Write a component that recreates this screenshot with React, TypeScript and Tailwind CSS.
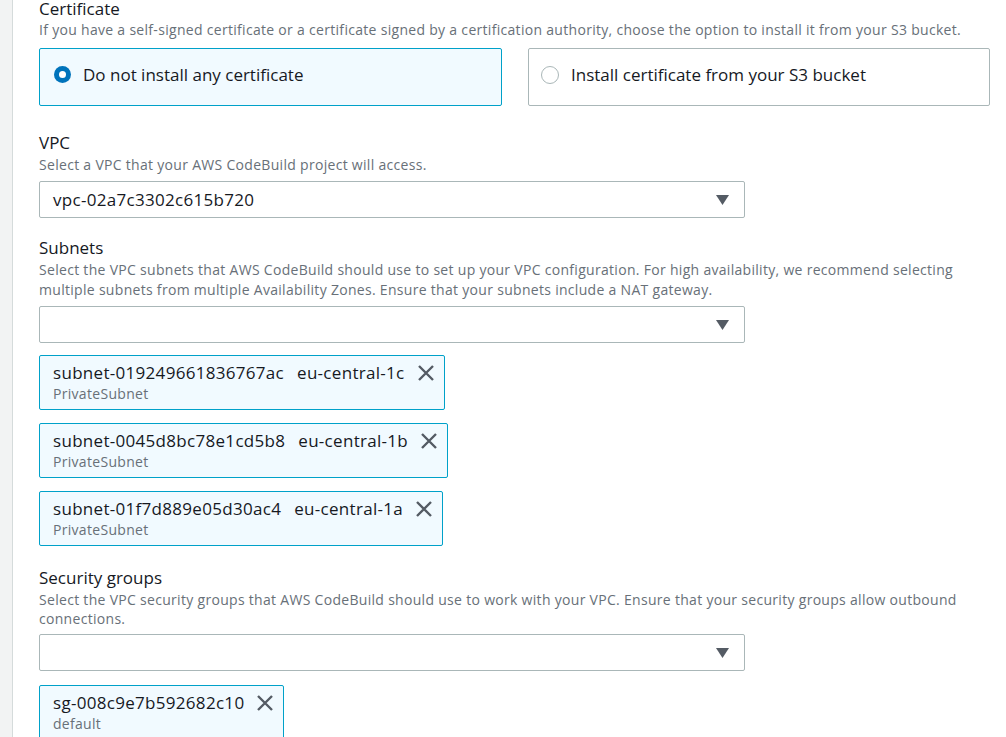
import React from "react";

type Token = { id: string; zone?: string; tag: string };

const subnets: Token[] = [
  { id: "subnet-019249661836767ac", zone: "eu-central-1c", tag: "PrivateSubnet" },
  { id: "subnet-0045d8bc78e1cd5b8", zone: "eu-central-1b", tag: "PrivateSubnet" },
  { id: "subnet-01f7d889e05d30ac4", zone: "eu-central-1a", tag: "PrivateSubnet" },
];

function Caret() {
  return (
    <svg width="13" height="10" viewBox="0 0 13 10" className="shrink-0">
      <path d="M0 0 H13 L6.5 10 Z" fill="#545b64" />
    </svg>
  );
}

function CloseX() {
  return (
    <svg width="18" height="18" viewBox="0 0 18 18" className="shrink-0">
      <path d="M2 2 L16 16 M16 2 L2 16" stroke="#545b64" strokeWidth="2.4" />
    </svg>
  );
}

function Select({ value }: { value?: string }) {
  return (
    <div className="w-[706px] h-[37px] border border-[#aab7b8] rounded-[2px] bg-white flex items-center justify-between pl-[13px] pr-[15px]">
      <span className="text-[17px] tracking-[0.3px] text-[#16191f]">{value ?? ""}</span>
      <Caret />
    </div>
  );
}

function TokenBox({ t }: { t: Token }) {
  return (
    <div className="inline-flex items-start border border-[#00a1c9] rounded-[2px] bg-[#f1faff] pl-[13px] pr-[9px] pt-[6px] pb-[5px] gap-[12px]">
      <div className="flex flex-col">
        <div className="text-[17px] leading-[22px] tracking-[0.3px] text-[#16191f] whitespace-nowrap">
          {t.id}
          {t.zone && <span className="ml-[13px]">{t.zone}</span>}
        </div>
        <div className="text-[14px] leading-[20px] tracking-[0.3px] text-[#687078]">{t.tag}</div>
      </div>
      <div className="pt-[2px]">
        <CloseX />
      </div>
    </div>
  );
}

function Field({ title, desc, children }: { title: string; desc: React.ReactNode; children: React.ReactNode }) {
  return (
    <div>
      <div className="text-[17px] leading-[22px] text-[#16191f]">{title}</div>
      <div className="text-[14px] leading-[20px] tracking-[0.3px] text-[#687078] mt-[1px] mb-[6px] whitespace-nowrap">{desc}</div>
      {children}
    </div>
  );
}

export default function App() {
  return (
    <div className="min-h-screen flex bg-white" style={{ fontFamily: '"Open Sans", "Noto Sans", sans-serif' }}>
      <div className="w-[13px] shrink-0 bg-[#f2f3f3] border-r border-[#d5dbdb]" />
      <div className="flex-1 pl-[26px] pr-[17px] flex flex-col">
        {/* Certificate */}
        <div>
          <div className="text-[17px] leading-[18px] text-[#16191f]">Certificate</div>
          <div className="mt-[2px] text-[14px] leading-[20px] tracking-[0.3px] text-[#687078] whitespace-nowrap">
            If you have a self-signed certificate or a certificate signed by a certification authority, choose the option to install it from your S3 bucket.
          </div>
          <div className="mt-[8px] flex gap-[26px]">
            <div className="w-[463px] h-[58px] border border-[#00a1c9] bg-[#f1faff] rounded-[2px] flex items-center pl-[14px] pb-[5px] gap-[12px]">
              <span className="w-[17px] h-[17px] rounded-full bg-[#0073bb] flex items-center justify-center">
                <span className="w-[7px] h-[7px] rounded-full bg-white" />
              </span>
              <span className="text-[17px] text-[#16191f]">Do not install any certificate</span>
            </div>
            <div className="w-[462px] h-[58px] border border-[#aab7b8] bg-white rounded-[2px] flex items-center pl-[12px] pb-[5px] gap-[12px]">
              <span className="w-[18px] h-[18px] rounded-full border-[1.5px] border-[#aab7b8] bg-white" />
              <span className="text-[17px] text-[#16191f]">Install certificate from your S3 bucket</span>
            </div>
          </div>
        </div>

        {/* VPC */}
        <div className="mt-[26px]">
          <Field title="VPC" desc="Select a VPC that your AWS CodeBuild project will access.">
            <Select value="vpc-02a7c3302c615b720" />
          </Field>
        </div>

        {/* Subnets */}
        <div className="mt-[19px]">
          <Field
            title="Subnets"
            desc={
              <>
                Select the VPC subnets that AWS CodeBuild should use to set up your VPC configuration. For high availability, we recommend selecting
                <br />
                multiple subnets from multiple Availability Zones. Ensure that your subnets include a NAT gateway.
              </>
            }
          >
            <Select />
          </Field>
          <div className="mt-[12px] flex flex-col items-start gap-[13px]">
            {subnets.map((s) => (
              <TokenBox key={s.id} t={s} />
            ))}
          </div>
        </div>

        {/* Security groups */}
        <div className="mt-[21px]">
          <Field
            title="Security groups"
            desc={
              <div className="leading-[19px]">
                Select the VPC security groups that AWS CodeBuild should use to work with your VPC. Ensure that your security groups allow outbound
                <br />
                connections.
              </div>
            }
          >
            <Select />
          </Field>
          <div className="mt-[14px] flex flex-col items-start">
            <TokenBox t={{ id: "sg-008c9e7b592682c10", tag: "default" }} />
          </div>
        </div>
      </div>
    </div>
  );
}
